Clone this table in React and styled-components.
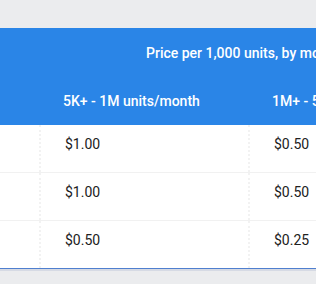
import React from "react";
import styled, { createGlobalStyle } from "styled-components";

const Global = createGlobalStyle`
  html, body { margin: 0; padding: 0; background: #ebecee; }
  body { font-family: Roboto, "Liberation Sans", Arial, sans-serif; overflow: hidden; }
`;

const Page = styled.div`
  width: 316px;
  height: 284px;
  padding-top: 28px;
  box-sizing: border-box;
  overflow: hidden;
`;

const Table = styled.div`
  width: 520px;
  background: #ffffff;
  border-bottom: 1px solid #4f7fcf;
  box-shadow: 0 2px 0 #d6dae4;
`;

const Header = styled.div`
  background: #2a85e7;
  color: #ffffff;
  font-weight: 500;
  font-size: 14px;
`;

const HeaderRow = styled.div`
  display: grid;
  grid-template-columns: 39px 209px 1fr;
  height: ${(p) => p.$h}px;
  align-items: center;
`;

const Span = styled.div`
  grid-column: 2 / 4;
  padding-left: 107px;
  white-space: nowrap;
`;

const HeadCell = styled.div`
  padding-left: 24px;
  white-space: nowrap;
`;

const Row = styled.div`
  display: grid;
  grid-template-columns: 39px 209px 1fr;
  height: 47px;
  border-top: ${(p) => (p.$first ? "none" : "1px solid #f1f1f1")};
`;

const Cell = styled.div`
  padding: 10px 0 0 24px;
  line-height: 18px;
  font-size: 14px;
  color: #212121;
  border-left: ${(p) => (p.$lead ? "none" : "2px dotted #f2f2f2")};
`;

const rows = [
  ["$1.00", "$0.50"],
  ["$1.00", "$0.50"],
  ["$0.50", "$0.25"],
];

export default function App() {
  return (
    <>
      <Global />
      <Page>
        <Table>
          <Header>
            <HeaderRow $h={49}>
              <Span>Price per 1,000 units, by monthly usage</Span>
            </HeaderRow>
            <HeaderRow $h={48}>
              <div />
              <HeadCell>5K+ - 1M units/month</HeadCell>
              <HeadCell>1M+ - 5M units/month</HeadCell>
            </HeaderRow>
          </Header>
          {rows.map((r, i) => (
            <Row key={i} $first={i === 0}>
              <Cell $lead />
              <Cell>{r[0]}</Cell>
              <Cell>{r[1]}</Cell>
            </Row>
          ))}
        </Table>
      </Page>
    </>
  );
}
